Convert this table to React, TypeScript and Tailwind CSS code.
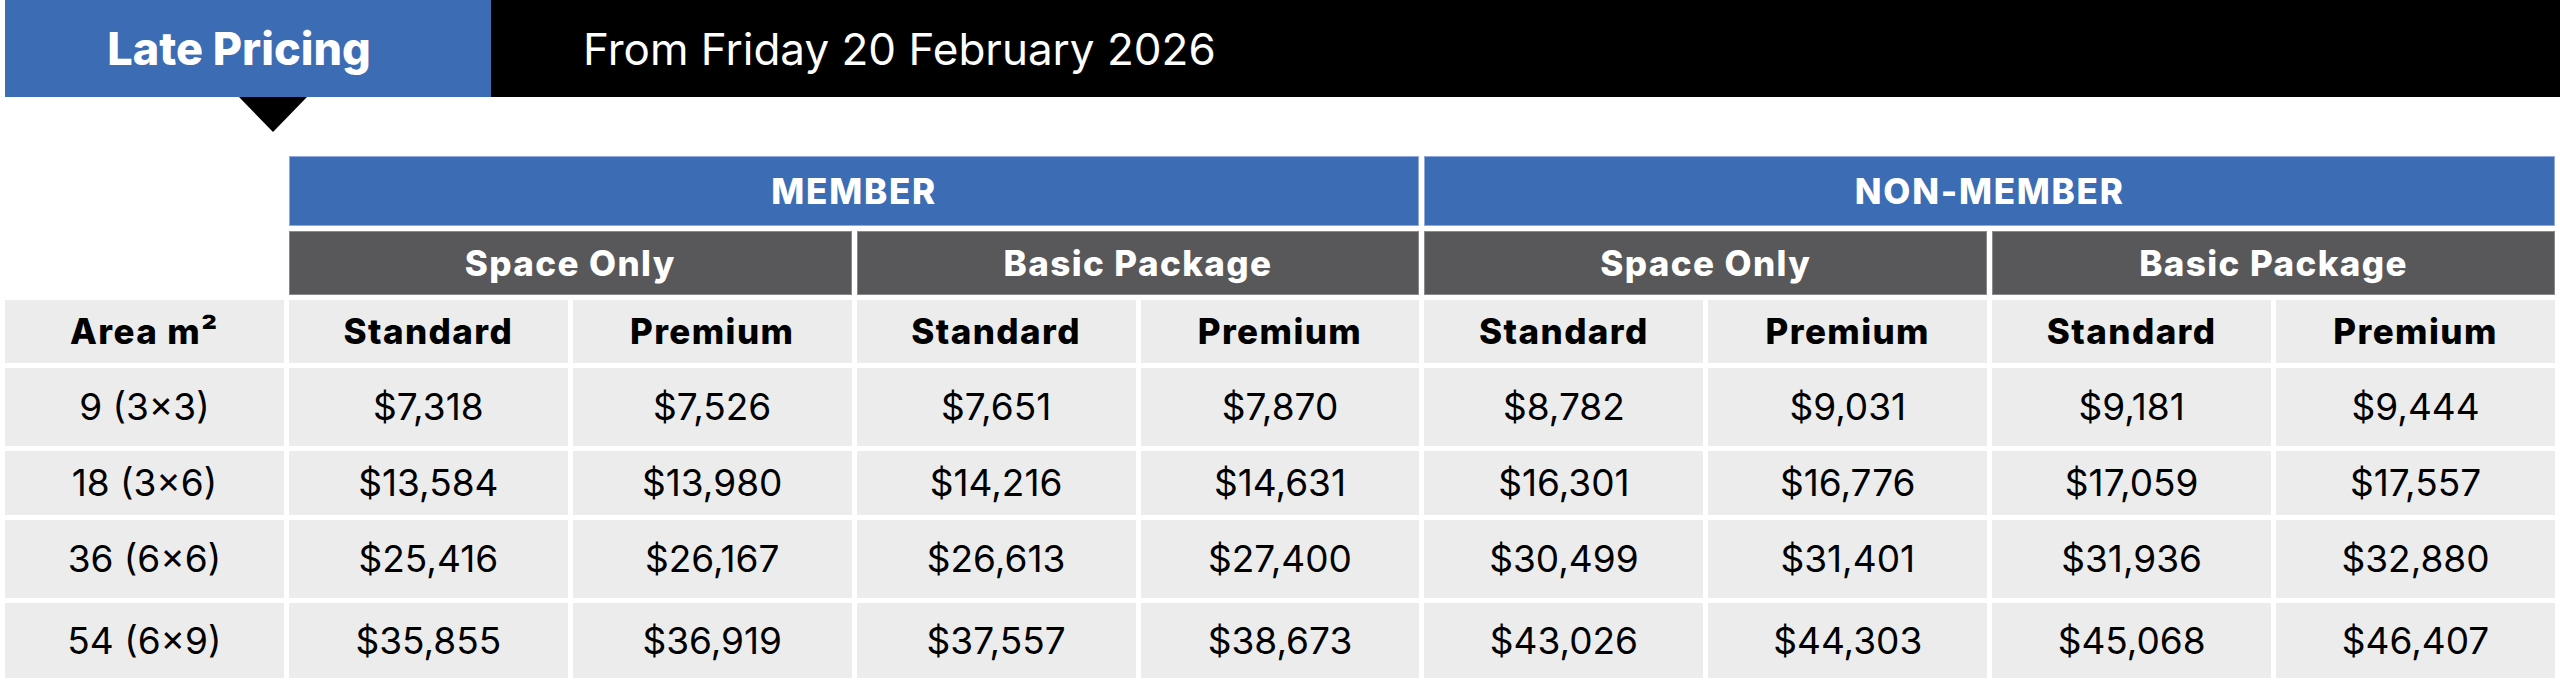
const rows = [
  ["9 (3×3)", "$7,318", "$7,526", "$7,651", "$7,870", "$8,782", "$9,031", "$9,181", "$9,444"],
  ["18 (3×6)", "$13,584", "$13,980", "$14,216", "$14,631", "$16,301", "$16,776", "$17,059", "$17,557"],
  ["36 (6×6)", "$25,416", "$26,167", "$26,613", "$27,400", "$30,499", "$31,401", "$31,936", "$32,880"],
  ["54 (6×9)", "$35,855", "$36,919", "$37,557", "$38,673", "$43,026", "$44,303", "$45,068", "$46,407"],
];

const rowHeights = ["h-[78px]", "h-[64px]", "h-[78px]", "h-[75px]"];

const groups = ["Space Only", "Basic Package", "Space Only", "Basic Package"];
const tiers = ["Standard", "Premium", "Standard", "Premium", "Standard", "Premium", "Standard", "Premium"];

const App = () => {
  return (
    <div className="w-[2560px] bg-white font-['Inter',sans-serif] text-black">
      {/* banner */}
      <div className="relative flex h-[97px] pl-[5px]">
        <div className="flex w-[486px] items-center justify-center pr-[18px] bg-[#3c6cb4] text-[45px] font-extrabold text-white">
          Late Pricing
        </div>
        <div className="flex flex-1 items-center bg-black pl-[92px] text-[44px] font-normal text-white">
          From Friday 20 February 2026
        </div>
        <div className="absolute left-[239px] top-[97px] h-0 w-0 border-x-[34px] border-t-[35px] border-x-transparent border-t-black" />
      </div>

      {/* pricing table */}
      <div className="mt-[59px] grid grid-cols-9 gap-[5px] px-[5px] pb-[19px]">
        <div className="h-[70px]" />
        <div className="col-span-4 flex h-[70px] items-center justify-center border border-[#8faadb] bg-[#3c6cb4] text-[35px] font-extrabold tracking-[0.05em] text-white">
          MEMBER
        </div>
        <div className="col-span-4 flex h-[70px] items-center justify-center border border-[#8faadb] bg-[#3c6cb4] text-[35px] font-extrabold tracking-[0.05em] text-white">
          NON-MEMBER
        </div>

        <div className="h-[64px]" />
        {groups.map((g, i) => (
          <div
            key={i}
            className="col-span-2 flex h-[64px] items-center justify-center border border-[#8a8a8c] bg-[#58585a] text-[35px] font-extrabold tracking-[0.04em] text-white"
          >
            {g}
          </div>
        ))}

        <div className="flex h-[63px] items-center justify-center bg-[#ececec] text-[35px] font-extrabold tracking-[0.04em]">
          Area m²
        </div>
        {tiers.map((t, i) => (
          <div
            key={i}
            className="flex h-[63px] items-center justify-center bg-[#ececec] text-[35px] font-extrabold tracking-[0.04em]"
          >
            {t}
          </div>
        ))}

        {rows.map((row, r) =>
          row.map((cell, c) => (
            <div
              key={`${r}-${c}`}
              className={`flex ${rowHeights[r]} items-center justify-center bg-[#ececec] text-[37px] font-normal`}
            >
              {cell}
            </div>
          ))
        )}
      </div>
    </div>
  );
};

export default App;
